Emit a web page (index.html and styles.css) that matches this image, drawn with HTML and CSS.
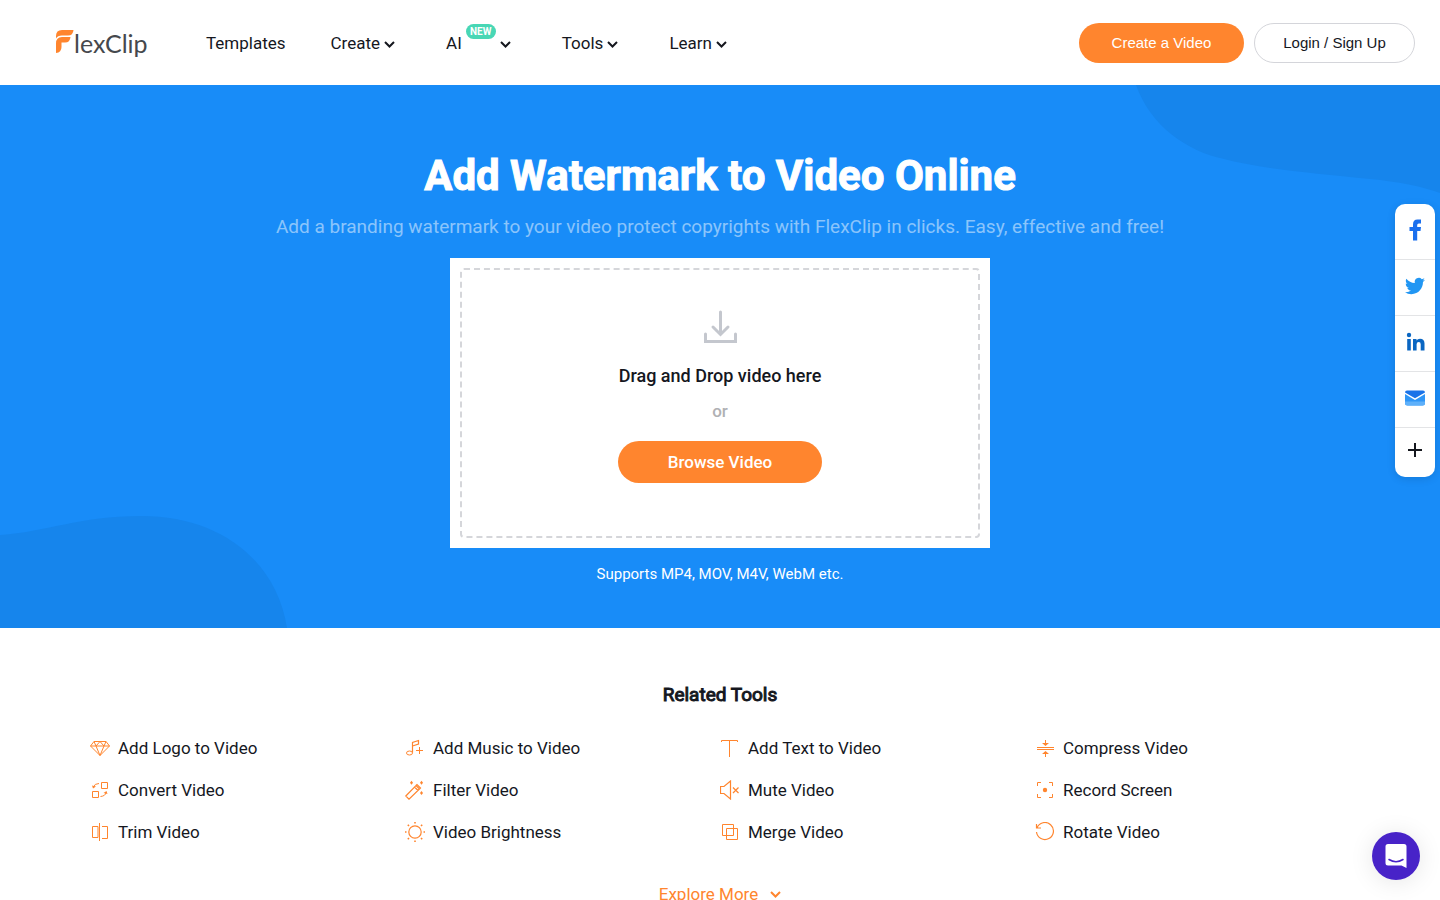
FILE: index.html
```html
<!DOCTYPE html>
<html lang="en">
<head>
<meta charset="utf-8">
<meta name="viewport" content="width=device-width, initial-scale=1">
<title>Add Watermark to Video Online</title>
<link rel="stylesheet" href="styles.css">
</head>
<body>
<header class="header">
  <a class="logo" href="#" aria-label="FlexClip">
    <svg class="logo-mark" width="18" height="26" viewBox="0 0 18 26" fill="#ff852e"><path d="M0 8.500V6Q0 0 6 0H17.500Q17 5.500 12 5.500H6Q1.500 5.500 0 8.500Z"/><path d="M0 23V13.500Q0 7 6 7H14.500Q14 12.500 9 12.500H5.500V17Q5.500 22.500 0 23Z"/></svg>
    <span>lexClip</span>
  </a>
  <nav class="nav">
    <a href="#">Templates</a>
    <a class="has-menu" href="#">Create<svg class="chevron" viewBox="0 0 11 7"><path d="M1 1l4.500 4.500L10 1"/></svg></a>
    <a class="has-menu" href="#">AI<span class="badge">NEW</span><svg class="chevron" viewBox="0 0 11 7"><path d="M1 1l4.500 4.500L10 1"/></svg></a>
    <a class="has-menu" href="#">Tools<svg class="chevron" viewBox="0 0 11 7"><path d="M1 1l4.500 4.500L10 1"/></svg></a>
    <a class="has-menu" href="#">Learn<svg class="chevron" viewBox="0 0 11 7"><path d="M1 1l4.500 4.500L10 1"/></svg></a>
  </nav>
  <div class="account">
    <button class="pill pill-primary" type="button">Create a Video</button>
    <button class="pill pill-outline" type="button">Login / Sign Up</button>
  </div>
</header>

<main>
  <section class="hero">
    <svg class="blob blob-top" width="308" height="112" viewBox="0 0 308 112"><path d="M4 0C18 40 54 66 92 74C130 84 180 88 238 94Q280 98 308 108V0Z"/></svg>
    <svg class="blob blob-bottom" width="288" height="113" viewBox="0 0 288 113"><path d="M0 20C45 17 80 1 140 1C215 0 276 42 287 113H0Z"/></svg>
    <h1>Add Watermark to Video Online</h1>
    <p class="lead">Add a branding watermark to your video protect copyrights with FlexClip in clicks. Easy, effective and free!</p>
    <div class="upload">
      <div class="dropzone">
        <svg class="download" width="34" height="34" viewBox="0 0 34 34"><path d="M17.500 2v22M10 17l7.500 7.500 7.500-7.500M2.500 24v7.500h30V24"/></svg>
        <p class="drop-title">Drag and Drop video here</p>
        <p class="drop-or">or</p>
        <button class="browse" type="button">Browse Video</button>
      </div>
    </div>
    <p class="formats">Supports MP4, MOV, M4V, WebM etc.</p>
  </section>

  <section class="related">
    <h2>Related Tools</h2>
    <div class="tools">
      <a href="#"><svg viewBox="0 0 20 20"><path d="M4 3.500h12l3.500 4.500L10 17.500.500 8zM.500 8h19M6 8l4 9.500L14 8M4 3.500L6 8l4-4.500L14 8l2-4.500"/></svg>Add Logo to Video</a>
      <a href="#"><svg viewBox="0 0 20 20"><path stroke-width="1.200" d="M7.500 14.500v-10l6-2v3.500l-6 2"/><ellipse cx="4.500" cy="15" rx="3" ry="2"/><path d="M14.500 9v7M11 12.500h7"/></svg>Add Music to Video</a>
      <a href="#"><svg viewBox="0 0 20 20"><path d="M1.500 4V2.500h16V4M9.500 2.500V19"/></svg>Add Text to Video</a>
      <a href="#"><svg viewBox="0 0 20 20"><path d="M2 9.500h17M2 11.500h17M10.500 2v4M10.500 15v4"/><path class="solid" d="M7 5h7l-3.500 3zM7 16h7l-3.500-3z"/></svg>Compress Video</a>
      <a href="#"><svg viewBox="0 0 20 20"><path d="M11.500 2.500h6v6h-6zM2.500 11.500h6v6h-6zM9 3.500Q4.500 3.500 3.500 7M10.500 16.500q5-.500 5.500-4"/><path class="solid" d="M2 5.500l1 3 3-2zM13.500 13l3-2 1 3z"/></svg>Convert Video</a>
      <a href="#"><svg viewBox="0 0 20 20"><path stroke-width="1.200" d="M.800 16L11 5.500 14.500 9 4 19.200zM9.500 7L13 10.500M11 5.500l1-1L15.500 8l-1 1"/><path class="solid" d="M6.500.800l1.500 2-1.500 2-1.500-2zM16.500.800l1.500 2-1.500 2-1.500-2zM16.500 11l1.500 2-1.500 2-1.500-2z"/></svg>Filter Video</a>
      <a href="#"><svg viewBox="0 0 20 20"><path stroke-width="1.200" d="M.500 6.500H4L10.500 1v18L4 13.500H.500zM13 7.500l5.500 5.500M18.500 7.500L13 13"/></svg>Mute Video</a>
      <a href="#"><svg viewBox="0 0 20 20"><path d="M6 2.500H2.500V6M14 2.500h3.500V6M2.500 14v3.500H6M14 17.500h3.500V14"/><circle class="solid" cx="10" cy="10" r="2.200"/></svg>Record Screen</a>
      <a href="#"><svg viewBox="0 0 20 20"><path d="M8 4.500H2.500v11H8V4.500M9.500 1v18M12 4.500h5.500v12H12"/></svg>Trim Video</a>
      <a href="#"><svg viewBox="0 0 20 20"><circle cx="10" cy="10" r="6.200" stroke-width="1.200"/><path stroke-width="1.600" d="M10 0v1.500M10 18.500V20M0 10h1.500M18.500 10H20M2.800 2.800l1.200 1.200M16 16l1.200 1.200M2.800 17.200L4 16M16 4l1.200-1.200"/></svg>Video Brightness</a>
      <a href="#"><svg viewBox="0 0 20 20"><path d="M2.500 2.500h11v11h-11zM6.500 6.500h11v11h-11z"/></svg>Merge Video</a>
      <a href="#"><svg viewBox="0 0 20 20"><path stroke-width="1.200" d="M1.500 2v4H6M2 6A8.500 8.500 0 1 1 1.500 10"/></svg>Rotate Video</a>
    </div>
    <a class="more" href="#">Explore More<svg class="chevron" viewBox="0 0 11 7"><path d="M1 1l4.500 4.500L10 1"/></svg></a>
  </section>
</main>

<aside class="share">
  <a href="#" aria-label="Facebook"><svg width="20" height="22" viewBox="0 0 20 22" fill="#1a6fee"><path d="M8 21.500V12H4.500V8H8V5.500Q8 .500 12.500 .500H16V4.500H13.800Q12.200 4.500 12.200 6V8H16L15.500 12H12.200V21.500Z"/></svg></a>
  <a href="#" aria-label="Twitter"><svg width="20" height="20" viewBox="0 0 24 24" fill="#2196f3"><path d="M23.950 4.570a10 10 0 0 1-2.820.770 4.960 4.960 0 0 0 2.160-2.720c-.950.550-2 .960-3.130 1.180a4.920 4.920 0 0 0-8.380 4.480C7.690 8.090 4.070 6.130 1.640 3.160a4.820 4.820 0 0 0-.670 2.480c0 1.710.870 3.210 2.190 4.100a4.900 4.900 0 0 1-2.230-.620v.060a4.920 4.920 0 0 0 3.950 4.830 5 5 0 0 1-2.210.080 4.940 4.940 0 0 0 4.600 3.420A9.870 9.870 0 0 1 0 19.540a14 14 0 0 0 7.550 2.210c9.050 0 14-7.500 14-13.980 0-.210 0-.420-.020-.630a10 10 0 0 0 2.460-2.550z"/></svg></a>
  <a href="#" aria-label="LinkedIn"><svg width="20" height="20" viewBox="0 0 20 20" fill="#0a66c2"><circle cx="4" cy="3" r="2.200"/><path d="M2.200 7h3.600v11.500H2.200zM8 7h3.500v1.500q1-1.800 3.500-1.800 4.500 0 4.500 4.800v7h-3.800v-6.200q0-2.400-1.900-2.400-2.200 0-2.200 2.400v6.200H8z"/></svg></a>
  <a href="#" aria-label="Email"><svg width="20" height="16" viewBox="0 0 20 16"><path fill="#2f96f7" d="M0 4l10 6 10-6v9q0 2.500-2.500 2.500h-15Q0 15.500 0 13z"/><path fill="#5eb0fa" d="M0 11.500h20V13q0 2.500-2.500 2.500h-15Q0 15.500 0 13z"/><path fill="#1a73e8" d="M2 .500h16q2 0 2 2L10 8.300 0 2.500q0-2 2-2z"/></svg></a>
  <a href="#" aria-label="More"><svg width="14" height="14" viewBox="0 0 14 14" fill="#15171e"><path d="M6 0h2v6h6v2H8v6H6V8H0V6h6z"/></svg></a>
</aside>

<button class="chat" type="button" aria-label="Open chat">
  <svg width="24" height="26" viewBox="0 0 24 26"><path fill="#fff" d="M4 1h16q2.500 0 2.500 2.500V25l-5-2.500H4Q1.500 22.500 1.500 20V3.500Q1.500 1 4 1z"/><path fill="none" stroke="#4823c8" stroke-width="1.500" stroke-linecap="round" d="M5 16.500q7 4.500 14 0"/></svg>
</button>
</body>
</html>
```
FILE: styles.css
```css
* { box-sizing: border-box; }
body {
  margin: 0;
  font-family: Roboto, "Liberation Sans", sans-serif;
  font-size: 17px;
  line-height: 22px;
  color: #15171e;
  background: #fff;
}
h1, h2, p { margin: 0; }
a { color: inherit; text-decoration: none; }
button { border: 0; padding: 0; font: inherit; cursor: pointer; }
svg { display: block; flex: none; }

.header {
  display: flex;
  align-items: center;
  height: 85px;
  padding: 0 25px 0 56px;
}
.logo {
  display: flex;
  align-items: center;
  width: 150px;
  font-family: Lato, sans-serif;
  font-size: 25px;
  line-height: 28px;
  color: #45484d;
}
.nav { display: flex; gap: 45px; flex: 1; }
.nav a { display: flex; align-items: center; }
.nav .has-menu { padding-right: 6px; gap: 4px; }
.chevron {
  width: 11px;
  height: 7px;
  fill: none;
  stroke: currentColor;
  stroke-width: 2;
}
.nav .chevron { margin-top: 4px; }
.badge {
  align-self: flex-start;
  width: 30px;
  height: 15px;
  margin-top: -8px;
  border-radius: 8px;
  background: #48d7b5;
  color: #fff;
  font-size: 10px;
  font-weight: 700;
  line-height: 15px;
  text-align: center;
}
.account { display: flex; gap: 10px; }
.pill {
  height: 40px;
  border-radius: 20px;
  font-family: "Liberation Sans", Arial, sans-serif;
  font-size: 15px;
}
.pill-primary { width: 165px; background: #ff852e; color: #fff; }
.pill-outline {
  width: 161px;
  border: 1px solid #d4d5da;
  background: #fff;
  color: #15171e;
}

.hero {
  position: relative;
  display: flex;
  flex-direction: column;
  align-items: center;
  padding: 64px 24px 43px;
  background: #188cf8;
  color: #fff;
  text-align: center;
}
.hero > * { position: relative; }
.hero > .blob { position: absolute; fill: #1685ec; }
.hero > .blob-top { top: 0; right: 0; }
.hero > .blob-bottom { bottom: 0; left: 0; }
.hero h1 {
  font-size: 42px;
  font-weight: 700;
  line-height: 54px;
  -webkit-text-stroke: 1px currentColor;
}
.lead {
  margin-top: 12px;
  font-size: 19px;
  line-height: 24px;
  color: rgba(255, 255, 255, 0.5);
}
.upload {
  width: 100%;
  max-width: 540px;
  margin-top: 19px;
  padding: 10px;
  background: #fff;
}
.dropzone {
  display: flex;
  flex-direction: column;
  align-items: center;
  padding: 40px 20px 53px;
  border: 2px dashed #d5d6da;
  border-radius: 4px;
}
.download { fill: none; stroke: #c4c7ce; stroke-width: 3; stroke-linecap: round; }
.drop-title { margin-top: 21px; font-size: 18px; font-weight: 500; color: #15171e; }
.drop-or { margin-top: 13px; font-weight: 500; color: #b0b1b4; }
.browse {
  width: 204px;
  height: 42px;
  margin-top: 19px;
  border-radius: 21px;
  background: #ff852e;
  color: #fff;
  font-weight: 500;
}
.formats { margin-top: 15px; font-size: 15px; }

.related {
  display: flex;
  flex-direction: column;
  align-items: center;
  padding: 54px 24px 16px;
}
.related h2 {
  font-size: 19px;
  font-weight: 400;
  line-height: 25px;
  -webkit-text-stroke: 1px currentColor;
}
.tools {
  display: grid;
  grid-template-columns: repeat(4, 1fr);
  gap: 20px 0;
  width: 100%;
  max-width: 1260px;
  margin-top: 30px;
}
.tools a { display: flex; align-items: center; gap: 8px; }
.tools svg { width: 20px; height: 20px; fill: none; stroke: #ff852e; }
.tools .solid { fill: #ff852e; stroke: none; }
.more {
  display: flex;
  align-items: center;
  gap: 12px;
  margin-top: 40px;
  color: #ff852e;
}

.share {
  position: fixed;
  top: 204px;
  right: 5px;
  width: 40px;
  border-radius: 10px;
  background: #fff;
  box-shadow: 0 2px 8px rgba(0, 0, 0, 0.12);
}
.share a {
  display: flex;
  align-items: center;
  justify-content: center;
  height: 56px;
  padding-bottom: 4px;
  border-bottom: 1px solid #e3e4e6;
}
.share a:last-child { height: 49px; padding-bottom: 5px; border: 0; }
.chat {
  position: fixed;
  right: 20px;
  bottom: 20px;
  display: flex;
  align-items: center;
  justify-content: center;
  width: 48px;
  height: 48px;
  border-radius: 50%;
  background: #4823c8;
  box-shadow: 0 2px 24px rgba(0, 0, 0, 0.1);
}
```
